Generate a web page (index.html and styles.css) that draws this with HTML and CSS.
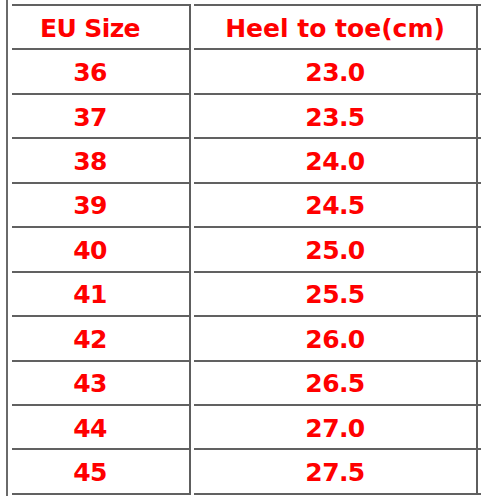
FILE: index.html
```html
<!DOCTYPE html>
<html>
<head>
<meta charset="utf-8">
<link rel="stylesheet" href="styles.css">
</head>
<body>
<div class="page">
  <div class="gutter"></div>
  <div class="table">
    <div class="col col-size">
      <div class="cell head">EU Size</div>
      <div class="cell">36</div>
      <div class="cell">37</div>
      <div class="cell">38</div>
      <div class="cell">39</div>
      <div class="cell">40</div>
      <div class="cell">41</div>
      <div class="cell">42</div>
      <div class="cell">43</div>
      <div class="cell">44</div>
      <div class="cell">45</div>
    </div>
    <div class="col col-len">
      <div class="cell head head-len">Heel to toe(cm)</div>
      <div class="cell">23.0</div>
      <div class="cell">23.5</div>
      <div class="cell">24.0</div>
      <div class="cell">24.5</div>
      <div class="cell">25.0</div>
      <div class="cell">25.5</div>
      <div class="cell">26.0</div>
      <div class="cell">26.5</div>
      <div class="cell">27.0</div>
      <div class="cell">27.5</div>
    </div>
    <div class="col col-edge">
      <div class="cell"></div><div class="cell"></div><div class="cell"></div>
      <div class="cell"></div><div class="cell"></div><div class="cell"></div>
      <div class="cell"></div><div class="cell"></div><div class="cell"></div>
      <div class="cell"></div><div class="cell"></div>
    </div>
  </div>
</div>
</body>
</html>
```

FILE: styles.css
```css
html, body {
  margin: 0;
  padding: 0;
  background: #ffffff;
}

.page {
  display: flex;
  align-items: flex-start;
  width: 481px;
  height: 500px;
  overflow: hidden;
}

.gutter {
  width: 6px;
  height: 496px;
  border-right: 2px solid #6a6a6a;
  flex: none;
}

.table {
  display: flex;
  margin-top: 4px;
  margin-left: 4px;
}

.col {
  display: flex;
  flex-direction: column;
  flex: none;
}

.col-size {
  width: 179px;
  border-right: 2px solid #5e5e5e;
  box-sizing: border-box;
  margin-right: 3px;
}

.col-len {
  width: 284px;
  border-right: 2px solid #5e5e5e;
  box-sizing: border-box;
}

.col-edge {
  width: 3px;
}

.cell {
  box-sizing: border-box;
  height: 44.45px;
  border-top: 2px solid #616161;
  display: flex;
  align-items: center;
  justify-content: center;
  padding-top: 2px;
  font-family: "DejaVu Sans", Verdana, sans-serif;
  font-weight: bold;
  font-size: 25px;
  letter-spacing: -0.6px;
  color: #ff0000;
  white-space: pre;
}

.cell:last-child {
  border-bottom: 2px solid #616161;
  height: 46.45px;
}

.col-size .cell {
  padding-right: 21px;
}

.head-len {
  letter-spacing: 0;
}
```
